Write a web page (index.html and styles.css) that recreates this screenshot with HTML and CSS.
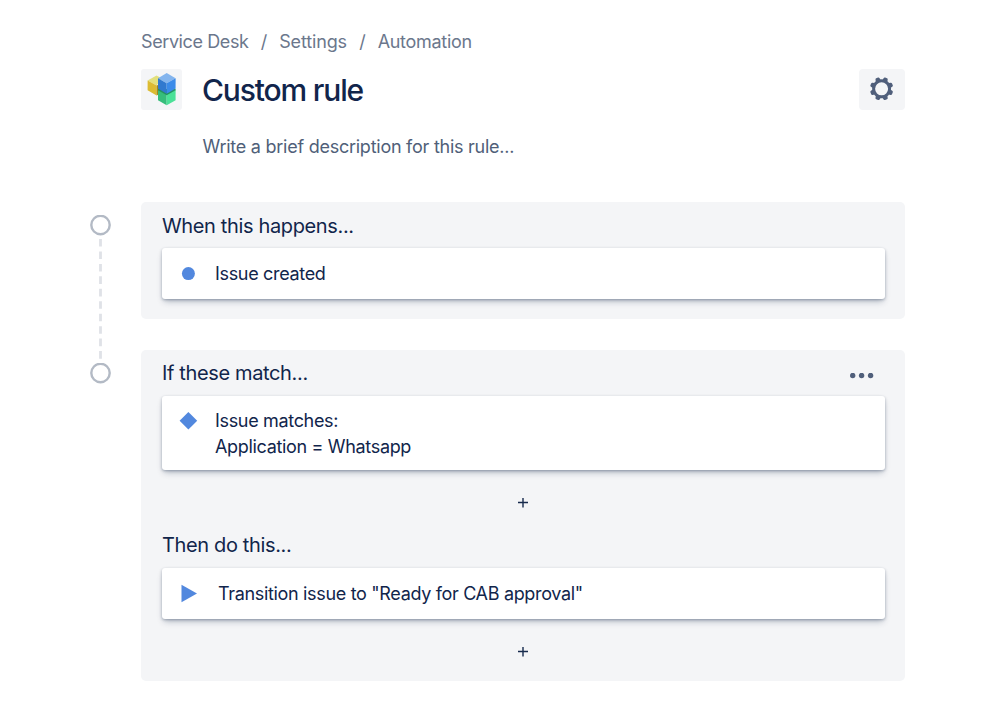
FILE: index.html
```html
<!DOCTYPE html>
<html lang="en">
<head>
<meta charset="utf-8">
<title>Custom rule</title>
<link rel="stylesheet" href="styles.css">
</head>
<body>
<main class="page">
  <nav class="breadcrumbs">
    <span class="crumb-desk">Service Desk</span><span class="slash">/</span><span class="crumb-settings">Settings</span><span class="slash">/</span><span class="crumb-auto">Automation</span>
  </nav>
  <header class="rule-header">
    <div class="avatar">
      <svg width="41" height="41" viewBox="0 0 41 41">
        <path fill="#e3e07c" d="M6.6 11.6 15.5 6.5 21 9.5 15.6 16.5z"/>
        <path fill="#dcbb31" d="M6.6 11.6 15.6 16.5v10L6.6 21.3z"/>
        <path fill="#a78a16" d="M15.6 16.5 20 15v9.3l-4.4 2.2z"/>
        <path fill="#36bd7b" d="M17 21 25.7 25v11.2L17 31.2z"/>
        <path fill="#4be198" d="M25.7 25 34.6 20.8v10.4l-8.9 5z"/>
        <path fill="#25935f" d="M17 19.6 20 20h11l3.6-.3v1.6L25.7 26.2 17 21.3z"/>
        <path fill="#84b5ee" d="M25.7 4 34.6 9.2 25.7 14.3 17 9.2z"/>
        <path fill="#3179cf" d="M17 9.2 25.7 14.3v10.4L17 19.6z"/>
        <path fill="#3b8be9" d="M34.6 9.2 25.7 14.3v10.4l8.9-5.1z"/>
      </svg>
    </div>
    <h1>Custom rule</h1>
    <button class="settings" aria-label="Rule settings">
      <svg width="24" height="24" viewBox="-11.6 -11.8 24 24">
        <g fill="#505f7b">
          <path id="tooth" d="M-2.9-7.5-2.2-10.6Q-2-11.7-1-11.7H1Q2-11.7 2.2-10.6L2.9-7.5z" transform="rotate(22.5)"/>
          <use href="#tooth" transform="rotate(45)"/><use href="#tooth" transform="rotate(90)"/>
          <use href="#tooth" transform="rotate(135)"/><use href="#tooth" transform="rotate(180)"/>
          <use href="#tooth" transform="rotate(225)"/><use href="#tooth" transform="rotate(270)"/>
          <use href="#tooth" transform="rotate(315)"/>
        </g>
        <circle r="8" fill="#f4f5f7" stroke="#505f7b" stroke-width="3"/>
      </svg>
    </button>
  </header>
  <p class="description">Write a brief description for this rule...</p>

  <div class="flow">
    <div class="rail">
      <svg class="node" width="21" height="21"><circle cx="10.5" cy="10" r="9.2"/></svg>
      <svg class="dash" width="4" height="120"><path d="M1.5 0V120"/></svg>
      <svg class="node" width="21" height="21"><circle cx="10.5" cy="10" r="9.2"/></svg>
    </div>
    <div class="panels">
      <section class="panel panel-when">
        <h2>When this happens...</h2>
        <div class="card"><svg class="mark" width="18" height="18"><circle cx="9.4" cy="8.6" r="6.5"/></svg><span>Issue created</span></div>
      </section>
      <section class="panel panel-if">
        <div class="panel-head"><h2>If these match...</h2>
          <svg class="more" width="24" height="6"><circle cx="2.7" cy="2.5" r="2.7"/><circle cx="11.6" cy="2.5" r="2.7"/><circle cx="20.6" cy="2.5" r="2.7"/></svg></div>
        <div class="card card-tall"><svg class="mark" width="19" height="18"><path d="M9.4 0 18.2 8.8 9.4 17.6 .6 8.8z"/></svg><div>Issue matches:<br>Application = Whatsapp</div></div>
        <div class="add"><svg width="10" height="10"><path d="M0 4.5h10M5 0v9.5"/></svg></div>
        <h2>Then do this...</h2>
        <div class="card card-action"><svg class="mark" width="18" height="18"><path d="M2.5 -.2 18 8.5 2.5 17.2z"/></svg><span>Transition issue to "Ready for CAB approval"</span></div>
        <div class="add"><svg width="10" height="10"><path d="M0 4.5h10M5 0v9.5"/></svg></div>
      </section>
    </div>
  </div>
</main>
</body>
</html>
```
FILE: styles.css
```css
* { box-sizing: border-box; }
body { margin: 0; background: #fff; color: #11254b; font: 18px/26px Inter, "Liberation Sans", sans-serif; letter-spacing: -.33px; }
.page { width: 905px; height: 710px; padding: 29px 0 0 141px; }
.breadcrumbs { display: flex; height: 40px; color: #6b778c; white-space: nowrap; }
.crumb-desk { letter-spacing: -.4px; }
.crumb-settings { letter-spacing: -.14px; }
.crumb-auto { letter-spacing: -.3px; }
.slash { width: 30.7px; text-align: center; }
.rule-header { display: flex; height: 41px; align-items: center; }
.avatar { width: 41px; height: 41px; border-radius: 3px; background: #f4f5f7; }
.avatar svg { display: block; }
h1 { margin: 0 auto 0 20px; font-size: 30px; line-height: 40px; font-weight: 500; letter-spacing: -1.15px; }
.settings { display: flex; width: 46px; height: 41px; padding: 0 0 1px; border: 0; border-radius: 4px; background: #f4f5f7; align-items: center; justify-content: center; }
.settings svg { overflow: visible; }
.description { margin: 24px 0 0 61.5px; color: #505f79; letter-spacing: -.25px; }
.flow { display: flex; margin: 42px 0 0 -51px; }
.rail { display: flex; width: 51px; padding: 13px 0 0; flex-direction: column; align-items: flex-start; }
.node { fill: none; stroke: #b3bac5; stroke-width: 2.4; }
.dash { margin: 3px 0 4px 9px; fill: none; stroke: #dfe2e7; stroke-width: 2.8; stroke-dasharray: 7.6 4.85; }
.panels { display: grid; width: 764px; gap: 31px; }
.panel { padding: 0 20px 0 21px; border-radius: 5px; background: #f4f5f7; }
.panel-when { height: 117px; }
.panel-if { height: 331px; }
h2 { height: 46px; margin: 0; font-size: 20px; line-height: 46px; font-weight: 400; letter-spacing: -.36px; }
.panel-when h2 { line-height: 48px; }
.panel-head { display: flex; align-items: center; justify-content: space-between; }
.more { margin: 5px 11px 0 0; fill: #505f7b; }
.card { display: flex; height: 51px; padding: 0 18px 0 17px; border-radius: 3px; background: #fff; align-items: center; box-shadow: 0 4px 7px -2px rgba(9,30,66,.3), 0 1px 3px rgba(9,30,66,.3); }
.card-tall { height: 74px; padding-top: 2px; }
.mark { width: 18px; margin-right: 18px; fill: #5288de; flex: none; overflow: visible; }
.card-tall .mark { margin-bottom: 26px; }
.card-action .mark { margin-right: 21px; }
.add { display: flex; height: 52px; padding: 14px 1px 0 0; align-items: center; justify-content: center; }
.add svg { fill: none; stroke: #172b4d; stroke-width: 1.4; }
```
